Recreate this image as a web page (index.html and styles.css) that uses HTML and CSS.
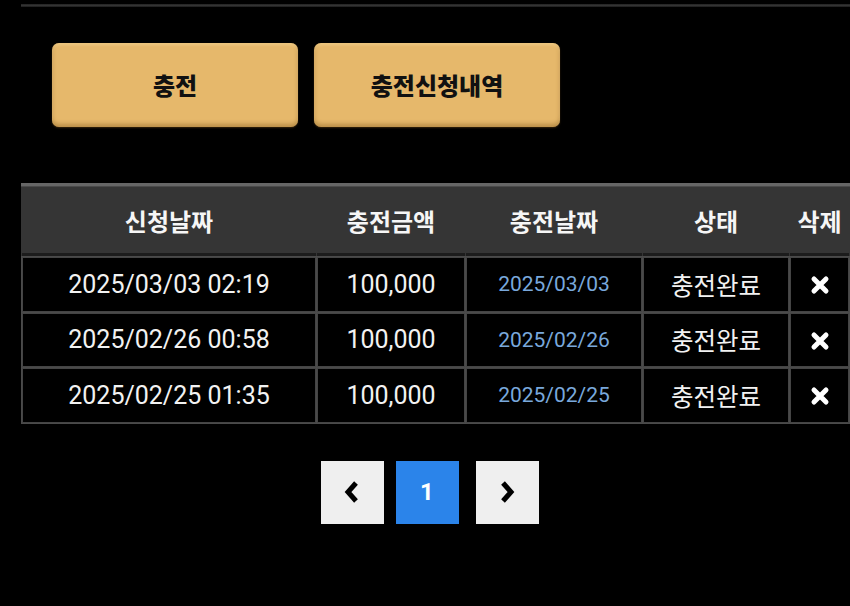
FILE: index.html
```html
<!DOCTYPE html>
<html lang="ko">
<head>
    <meta charset="UTF-8">
    <meta name="viewport" content="width=device-width, initial-scale=1.0">
    <title>충전신청내역</title>
    <link rel="stylesheet" href="styles.css">
</head>
<body>

<div class="page">
    <div class="top-line"></div>

    <!-- 상단 버튼 -->
    <div class="tab-buttons">
        <button type="button" class="tab-btn">충전</button>
        <button type="button" class="tab-btn">충전신청내역</button>
    </div>

    <table class="history">
        <thead>
            <tr>
                <th class="col-req">신청날짜</th>
                <th class="col-amt">충전금액</th>
                <th class="col-date">충전날짜</th>
                <th class="col-state">상태</th>
                <th class="col-del">삭제</th>
            </tr>
        </thead>
        <tbody>
            <tr>
                <td>2025/03/03 02:19</td>
                <td>100,000</td>
                <td class="done-date">2025/03/03</td>
                <td class="state">충전완료</td>
                <td class="del"><svg width="20" height="20" viewBox="0 0 20 20"><path d="M4 4 L16 16 M16 4 L4 16" stroke="#fff" stroke-width="5" stroke-linecap="round"/></svg></td>
            </tr>
            <tr>
                <td>2025/02/26 00:58</td>
                <td>100,000</td>
                <td class="done-date">2025/02/26</td>
                <td class="state">충전완료</td>
                <td class="del"><svg width="20" height="20" viewBox="0 0 20 20"><path d="M4 4 L16 16 M16 4 L4 16" stroke="#fff" stroke-width="5" stroke-linecap="round"/></svg></td>
            </tr>
            <tr>
                <td>2025/02/25 01:35</td>
                <td>100,000</td>
                <td class="done-date">2025/02/25</td>
                <td class="state">충전완료</td>
                <td class="del"><svg width="20" height="20" viewBox="0 0 20 20"><path d="M4 4 L16 16 M16 4 L4 16" stroke="#fff" stroke-width="5" stroke-linecap="round"/></svg></td>
            </tr>
        </tbody>
    </table>

    <!-- 페이지 -->
    <div class="pager">
        <a class="pager-btn">
            <svg width="20" height="26" viewBox="0 0 20 26"><path d="M14 4 L6 13 L14 22" fill="none" stroke="#000" stroke-width="5"/></svg>
        </a>
        <a class="pager-btn current">1</a>
        <a class="pager-btn">
            <svg width="20" height="26" viewBox="0 0 20 26"><path d="M6 4 L14 13 L6 22" fill="none" stroke="#000" stroke-width="5"/></svg>
        </a>
    </div>
</div>

</body>
</html>
```

FILE: styles.css
```css
body {
    margin: 0;
    padding: 0;
    background-color: #000;
    font-family: Roboto, "Noto Sans CJK KR", sans-serif;
    color: #fff;
}
.page {
    padding-left: 21px;
    overflow: hidden;
}
.top-line {
    margin-top: 4px;
    height: 3px;
    background: linear-gradient(#222, #333, #1a1a1a);
}
.tab-buttons {
    display: flex;
    gap: 16px;
    margin: 36px 0 0 31px;
}
.tab-btn {
    width: 246px;
    height: 84px;
    padding-bottom: 3px;
    border: none;
    border-radius: 7px;
    background-color: #e6b86b;
    box-shadow: inset 0 -3px 4px rgba(120, 80, 20, 0.4), inset 0 2px 3px rgba(255, 230, 170, 0.4), 0 1px 2px rgba(90, 60, 20, 0.6);
    font-family: "Noto Sans CJK KR", sans-serif;
    font-size: 24px;
    font-weight: 900;
    color: #111;
    cursor: pointer;
}
.history {
    margin-top: 56px;
    width: 829px;
    border-collapse: separate;
    border-spacing: 1px;
    background-color: #4a4a4a;
    border-top: 3px solid #666;
}
.history th {
    height: 66px;
    background-color: #353535;
    box-shadow: 1px 0 0 #353535, -1px 0 0 #353535;
    font-family: "Noto Sans CJK KR", sans-serif;
    font-size: 24px;
    font-weight: bold;
    color: #f6f6f6;
    border-bottom: 3px solid #1c1c1c;
    padding: 0;
}
.history td {
    height: 52.5px;
    background-color: #000;
    border: 1px solid #444;
    text-align: center;
    font-size: 25px;
    color: #f2f2f2;
    padding: 0;
}
.col-req { width: 294px; }
.col-amt { width: 148px; }
.col-date { width: 176px; }
.col-state { width: 146px; }
.history td.done-date {
    font-size: 21px;
    color: #79a8dc;
}
.history td.state {
    font-family: "Noto Sans CJK KR", sans-serif;
    font-size: 24.5px;
}
.history td.del svg {
    display: block;
    margin: 2px auto 0;
}
.pager {
    display: flex;
    justify-content: center;
    gap: 12px;
    margin: 37px 0 0;
    padding-right: 12px;
}
.pager-btn {
    width: 63px;
    height: 63px;
    display: flex;
    align-items: center;
    justify-content: center;
    background-color: #efefef;
    cursor: pointer;
}
.pager-btn.current {
    background-color: #2b84ea;
    color: #fff;
    font-size: 24px;
    font-weight: bold;
    margin-right: 5px;
}
```
